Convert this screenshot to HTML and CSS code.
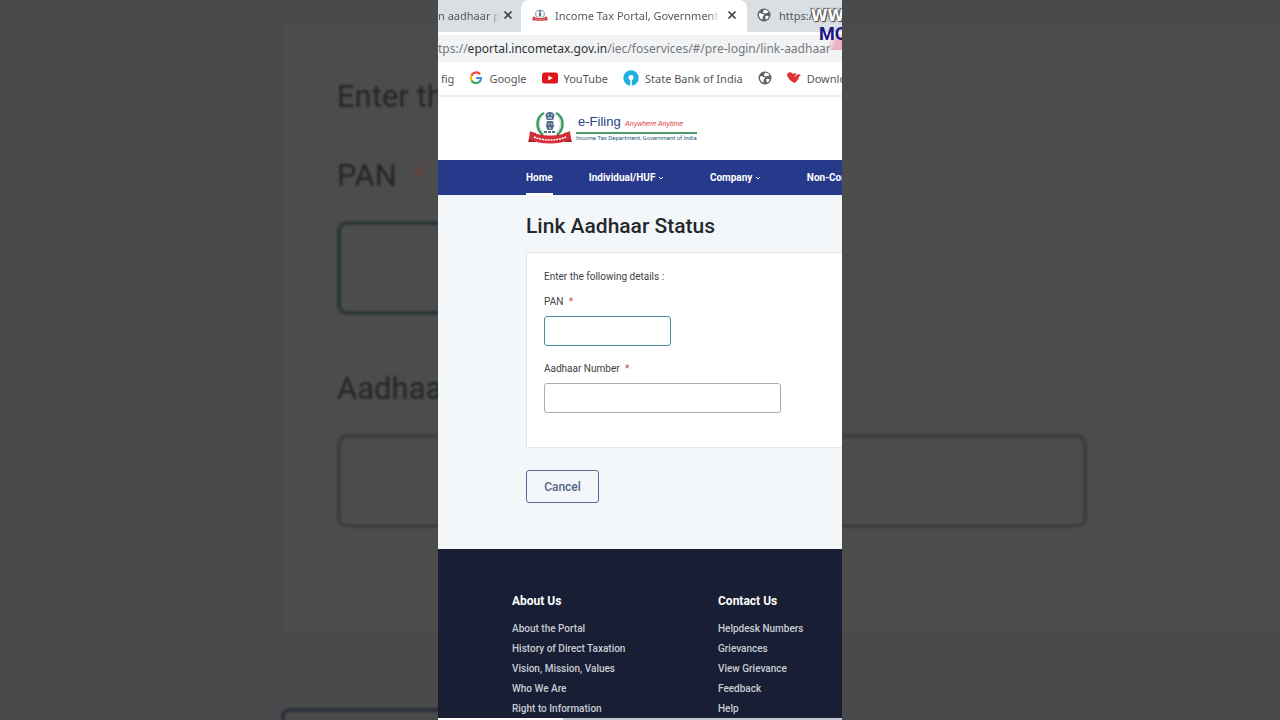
FILE: index.html
```html
<!DOCTYPE html>
<html lang="en">
<head>
    <meta charset="UTF-8">
    <meta name="viewport" content="width=device-width, initial-scale=1.0">
    <title>Link Aadhaar Status</title>
    <link rel="stylesheet" href="styles.css">
</head>
<body>
    <!-- enlarged, darkened copy of the form behind the panel -->
    <div class="backdrop" aria-hidden="true">
        <div class="backdrop-card">
            <p class="backdrop-text backdrop-intro">Enter the</p>
            <p class="backdrop-text">PAN <span class="required">*</span></p>
            <div class="backdrop-field backdrop-pan"></div>
            <p class="backdrop-text">Aadhaar</p>
            <div class="backdrop-field"></div>
        </div>
        <div class="backdrop-button"></div>
    </div>

    <div class="panel">
        <svg class="symbols" width="0" height="0">
            <symbol id="globe" viewBox="0 0 14 14">
                <circle cx="7" cy="7" r="6.5" fill="#5f6368"/>
                <path d="M2 5.5c2-.6 3 .8 4.700.6c1 1.100-.6 1.700-1 2.700c-.2 1 .3 2-.4 2.700C3 11 1.600 8.500 2 5.500zM6.500 2c1.800-.5 4 .4 5 2.200c-.8 1-2.300.4-3 1.200c-1 .2-2.700-.3-2.600-1.400c.1-.8 1-1 .6-2zM8.500 8c1.500-.6 2.700.1 3.400.5c-.5 1.600-1.500 2.700-2.900 3.200c-.1-1.300-1.200-2.400-.5-3.700z" fill="#fff"/>
            </symbol>
            <symbol id="close" viewBox="0 0 10 10">
                <path d="M1.500 1.500l7 7M8.500 1.500l-7 7" stroke="#3c4043" stroke-width="1.700"/>
            </symbol>
            <symbol id="chevron" viewBox="0 0 6 6">
                <path d="M1 2l2 2 2-2" fill="none" stroke="#fff" stroke-width="1"/>
            </symbol>
            <symbol id="emblem" viewBox="0 0 46 34">
                <path d="M17 3C9 7 8 19 16 25M29 3c8 4 9 16 1 22" fill="none" stroke="#3d9a62" stroke-width="2.500"/>
                <path d="M15 7c-4 5-3 12 2 16M31 7c4 5 3 12-2 16" fill="none" stroke="#b9dcc6" stroke-width="1"/>
                <path d="M18.500 6c0-3 2-4 4.500-4s4.500 1 4.500 4l-1.500 4h-6zM20 11h6l1 5-1.500 4h-5L19 16z" fill="#53698a"/>
                <path d="M20.500 5h1.500M24 5h1.500M21 8h4M21 14h1.500M24 14h1.500M22 18h2" stroke="#fff" stroke-width="1"/>
                <path d="M17 22h12" stroke="#53698a" stroke-width="2" stroke-dasharray="3 1"/>
                <path d="M1 32l3-10 5 1v9zM45 32l-3-10-5 1v9z" fill="#a9212d"/>
                <path d="M3 21c10 6 30 6 40 0l1 8c-12 6-30 6-42 0z" fill="#d62f3a"/>
                <path d="M7 27c9 4 23 4 32 0" fill="none" stroke="#fff" stroke-width="1.500" stroke-dasharray="2 .8"/>
            </symbol>
        </svg>

        <div class="tabs">
            <div class="tab tab-first">
                <span class="tab-title">n aadhaar p</span>
                <button class="tab-close" aria-label="Close tab"><svg><use href="#close"/></svg></button>
            </div>
            <div class="tab tab-active">
                <svg class="favicon"><use href="#emblem"/></svg>
                <span class="tab-title">Income Tax Portal, Government of India</span>
                <button class="tab-close" aria-label="Close tab"><svg><use href="#close"/></svg></button>
            </div>
            <div class="tab tab-last">
                <svg class="icon"><use href="#globe"/></svg>
                <span class="tab-title">https:/</span>
            </div>
        </div>

        <div class="address">
            <span>tps://<b>eportal.incometax.gov.in</b>/iec/foservices/#/pre-login/link-aadhaar-</span>
        </div>

        <div class="bookmarks">
            <a href="#" class="bookmark">fig</a>
            <a href="#" class="bookmark">
                <svg class="icon" viewBox="0 0 14 14" fill="none" stroke-width="2.200">
                    <path d="M11 3.300A5 5 0 0 0 2.500 4.600" stroke="#ea4335"/>
                    <path d="M2.500 4.600a5 5 0 0 0 0 4.800" stroke="#fbbc05"/>
                    <path d="M2.500 9.400a5 5 0 0 0 7.800 1.400" stroke="#34a853"/>
                    <path d="M10.300 10.800A5 5 0 0 0 12 7H7" stroke="#4285f4"/>
                </svg>
                Google
            </a>
            <a href="#" class="bookmark">
                <svg class="icon icon-wide" viewBox="0 0 16 14">
                    <rect y="1.500" width="16" height="11" rx="2.500" fill="#e0141b"/>
                    <path d="M6.300 4.500l4.500 2.500-4.500 2.500z" fill="#fff"/>
                </svg>
                YouTube
            </a>
            <a href="#" class="bookmark">
                <svg class="icon icon-bank" viewBox="0 0 16 16">
                    <circle cx="8" cy="8" r="7.700" fill="#1fb0e2"/>
                    <circle cx="8" cy="7.500" r="2.500" fill="#fff"/>
                    <path d="M7.200 8h1.600v8H7.200z" fill="#fff"/>
                </svg>
                State Bank of India
            </a>
            <a href="#" class="bookmark" aria-label="Bookmark"><svg class="icon"><use href="#globe"/></svg></a>
            <a href="#" class="bookmark">
                <svg class="icon" viewBox="0 0 14 14">
                    <path d="M0 4c0-3 4-4 6-1c1-1 2-1 3-.5l-.5 1.500c2-1 4-1 5.500.5l-2 1c0 3-2 4-4 6.500C5 11 1 8 0 4z" fill="#da3530"/>
                    <path d="M7 6l4-3" stroke="#fff" stroke-width=".6"/>
                </svg>
                Downloads
            </a>
        </div>

        <header class="site-header">
            <svg class="emblem"><use href="#emblem"/></svg>
            <div class="brand">
                <div class="brand-top"><span class="brand-name">e-Filing</span> <em>Anywhere Anytime</em></div>
                <div class="brand-bottom">Income Tax Department, Government of India</div>
            </div>
        </header>

        <nav class="site-nav">
            <a href="#" class="current">Home</a>
            <a href="#" class="has-menu">Individual/HUF <svg><use href="#chevron"/></svg></a>
            <a href="#" class="has-menu">Company <svg><use href="#chevron"/></svg></a>
            <a href="#" class="has-menu">Non-Company <svg><use href="#chevron"/></svg></a>
        </nav>

        <main>
            <h1>Link Aadhaar Status</h1>
            <form>
                <div class="card">
                    <p class="intro">Enter the following details :</p>
                    <label for="pan">PAN <span class="required">*</span></label>
                    <input type="text" id="pan" class="pan">
                    <label for="aadhaar">Aadhaar Number <span class="required">*</span></label>
                    <input type="text" id="aadhaar" class="aadhaar">
                </div>
                <button type="button" class="cancel">Cancel</button>
            </form>
        </main>

        <footer>
            <div class="footer-column">
                <h2>About Us</h2>
                <a href="#">About the Portal</a>
                <a href="#">History of Direct Taxation</a>
                <a href="#">Vision, Mission, Values</a>
                <a href="#">Who We Are</a>
                <a href="#">Right to Information</a>
            </div>
            <div class="footer-column">
                <h2>Contact Us</h2>
                <a href="#">Helpdesk Numbers</a>
                <a href="#">Grievances</a>
                <a href="#">View Grievance</a>
                <a href="#">Feedback</a>
                <a href="#">Help</a>
            </div>
        </footer>
        <div class="progress"><div class="progress-done"></div></div>

        <div class="watermark">
            <span class="watermark-www">WW</span>
            <span class="watermark-name">MO</span>
        </div>
    </div>
</body>
</html>
```

FILE: styles.css
```css
* {
    margin: 0;
    padding: 0;
    box-sizing: border-box;
}

body {
    background: #494a4b;
    min-height: 100vh;
    display: flex;
    justify-content: center;
    font-family: Roboto, "Liberation Sans", sans-serif;
    overflow: hidden;
}

a {
    color: inherit;
    text-decoration: none;
}

.required {
    color: #c0504d;
    margin-left: 3px;
}

/* Backdrop */
.backdrop {
    position: absolute;
    inset: 0;
    padding: 22px 0 0 281px;
    overflow: hidden;
    filter: blur(1px);
}

.backdrop-card {
    background: #4c4c4c;
    border: 2px solid #464849;
    border-right: none;
    padding: 48px 54px;
    height: 614px;
    margin-bottom: 72px;
}

.backdrop-text {
    font-size: 31px;
    line-height: 50px;
    color: #242526;
    margin-bottom: 20px;
}

.backdrop-intro {
    margin-bottom: 29px;
}

.backdrop-text .required {
    color: #64403f;
    margin-left: 8px;
}

.backdrop-field {
    width: 750px;
    height: 94px;
    border: 4px solid #3e3e3e;
    border-radius: 10px;
}

.backdrop-pan {
    width: 400px;
    border-color: #2c3639;
    margin-bottom: 49px;
}

.backdrop-button {
    width: 230px;
    height: 100px;
    border: 4px solid #2d303a;
    border-radius: 8px;
}

/* Panel */
.panel {
    position: relative;
    width: 100%;
    max-width: 404px;
    height: 100vh;
    display: flex;
    flex-direction: column;
    background: #fff;
    overflow: hidden;
}

.symbols {
    position: absolute;
}

.icon {
    width: 14px;
    height: 14px;
    flex: none;
}

.icon-wide {
    width: 16px;
}

.icon-bank {
    width: 16px;
    height: 16px;
}

/* Browser bars */
.tabs,
.address,
.bookmarks {
    font-family: "Noto Sans", "Open Sans", sans-serif;
    color: #54585c;
    white-space: nowrap;
    display: flex;
    align-items: center;
    flex: none;
}

.tabs {
    height: 32px;
    background: #dadfe4;
    font-size: 11px;
}

.tab {
    height: 32px;
    padding-bottom: 2px;
    display: flex;
    align-items: center;
    flex: none;
}

.tab-first {
    width: 83px;
    padding-right: 8px;
}

.tab-active {
    width: 226px;
    padding: 0 10px 2px 11px;
    gap: 7px;
    background: #fff;
    border-radius: 8px 8px 0 0;
}

.tab-last {
    padding-left: 10px;
    gap: 8px;
}

.tab-title {
    flex: 1;
    overflow: hidden;
}

.tab-first .tab-title,
.tab-active .tab-title {
    mask-image: linear-gradient(to right, #000 calc(100% - 12px), transparent);
}

.favicon {
    width: 16px;
    height: 12px;
    flex: none;
}

.tab-close {
    width: 10px;
    height: 10px;
    border: none;
    background: none;
    flex: none;
}

.tab-first .tab-close {
    margin-left: 3px;
}

.tab-close svg {
    display: block;
    width: 10px;
    height: 10px;
}

.address {
    height: 31px;
    background: #f1f3f4;
    border-top: 3px solid #fff;
    border-bottom: 1px solid #fff;
    font-size: 12px;
    color: #74787c;
}

.address b {
    font-weight: 400;
    color: #303336;
}

.bookmarks {
    height: 34px;
    padding: 0 0 2px 3px;
    gap: 15px;
    font-size: 11px;
    border-bottom: 2px solid #eceeef;
}

.bookmark {
    display: flex;
    align-items: center;
    gap: 6px;
}

/* Site header */
.site-header {
    height: 63px;
    padding: 0 0 3px 89px;
    display: flex;
    align-items: center;
    gap: 3px;
    flex: none;
}

.emblem {
    width: 46px;
    height: 34px;
}

.brand {
    font-family: "Liberation Sans", Arial, sans-serif;
    white-space: nowrap;
}

.brand-top {
    padding-left: 2px;
    line-height: 16px;
    border-bottom: 2px solid #4d9c6c;
}

.brand-name {
    font-size: 13px;
    color: #243f86;
}

.brand-top em {
    font-size: 7px;
    color: #dc4046;
}

.brand-bottom {
    font-family: Roboto, "Liberation Sans", sans-serif;
    font-size: 6px;
    line-height: 8px;
    color: #245b7e;
}

/* Navigation */
.site-nav {
    height: 35px;
    padding-left: 88px;
    display: flex;
    gap: 36px;
    flex: none;
    background: #27398b;
    color: #fff;
    font-size: 10px;
    font-weight: 700;
    line-height: 35px;
    white-space: nowrap;
}

.current {
    border-bottom: 2px solid #fff;
}

.has-menu {
    padding-right: 10px;
}

.has-menu svg {
    width: 6px;
    height: 6px;
}

/* Form */
main {
    flex: none;
    background: #f4f7fa;
    padding: 16px 0 46px 88px;
}

h1 {
    font-size: 21px;
    line-height: 30px;
    font-weight: 500;
    color: #25282b;
    margin-bottom: 11px;
}

.card {
    background: #fff;
    border: 1px solid #e2e6e9;
    border-right: none;
    padding: 14px 17px 34px;
    margin-bottom: 22px;
}

.intro,
label {
    display: block;
    font-size: 10px;
    line-height: 20px;
    color: #404245;
}

.intro {
    margin-bottom: 5px;
}

input {
    display: block;
    height: 30px;
    margin-top: 4px;
    padding: 0 8px;
    border: 1px solid #aaacaf;
    border-radius: 3px;
    background: #fff;
    font-size: 10px;
}

.pan {
    width: 127px;
    margin-bottom: 13px;
    border-color: #4e8d9f;
}

.aadhaar {
    width: 237px;
}

.cancel {
    width: 73px;
    height: 33px;
    border: 1px solid #5d6c98;
    border-radius: 3px;
    background: none;
    color: #566489;
    font-family: inherit;
    font-size: 12px;
    font-weight: 500;
}

/* Footer */
footer {
    flex: 1;
    min-height: 0;
    padding: 42px 0 0 74px;
    display: grid;
    grid-template-columns: 206px 1fr;
    background: #181e33;
    color: #c9ccd4;
    overflow: hidden;
}

.footer-column {
    display: flex;
    flex-direction: column;
}

.footer-column h2 {
    font-size: 12px;
    line-height: 20px;
    font-weight: 700;
    color: #fff;
    margin-bottom: 8px;
}

.footer-column a {
    font-size: 10px;
    line-height: 20px;
    font-weight: 500;
}

.progress {
    height: 2px;
    flex: none;
    background: #c5c7d3;
}

.progress-done {
    width: 31%;
    height: 2px;
    background: #fff;
}

/* Watermark over the top corner */
.watermark {
    position: absolute;
    top: 9px;
    left: 373px;
    display: flex;
    flex-direction: column;
    font-weight: 700;
    white-space: nowrap;
}

.watermark-www {
    font-family: "DejaVu Sans", sans-serif;
    font-size: 15px;
    line-height: 15px;
    color: #fff;
    text-shadow: 0 0 2px #444, 1px 1px 1px #444, -1px -1px 1px #666;
}

.watermark-name {
    margin-left: 8px;
    height: 26px;
    font-size: 18px;
    line-height: 19px;
    color: #1b1680;
    background: radial-gradient(ellipse at 80% 22px, #edb0c8 20%, transparent 45%);
}
```
